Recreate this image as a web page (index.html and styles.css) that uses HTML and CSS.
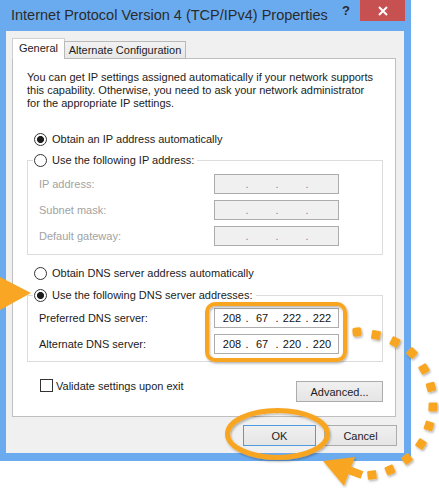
FILE: index.html
```html
<!DOCTYPE html>
<html lang="en">
<head>
<meta charset="utf-8">
<title>Internet Protocol Version 4 (TCP/IPv4) Properties</title>
<link rel="stylesheet" href="styles.css">
</head>
<body>
<div class="stage">
  <div class="window">
    <div class="titlebar">
      <span class="title">Internet Protocol Version 4 (TCP/IPv4) Properties</span>
      <span class="help">?</span>
      <span class="close">
        <svg width="10" height="10" viewBox="0 0 10 10"><path d="M1 1 L9 9 M9 1 L1 9" stroke="#fff" stroke-width="2" fill="none"/></svg>
      </span>
    </div>
    <div class="client">
      <div class="tabs">
        <div class="tab active">General</div>
        <div class="tab">Alternate Configuration</div>
      </div>
      <div class="panel">
        <p class="intro">You can get IP settings assigned automatically if your network supports<br>this capability. Otherwise, you need to ask your network administrator<br>for the appropriate IP settings.</p>

        <div class="opt first"><span class="radio on"></span>Obtain an IP address automatically</div>

        <div class="group g1">
          <div class="legend opt"><span class="radio"></span>Use the following IP address:</div>
          <div class="rows">
            <div class="row disabled"><span class="lbl">IP address:</span>
              <span class="ip"><span class="oct"></span><span class="dot">.</span><span class="oct"></span><span class="dot">.</span><span class="oct"></span><span class="dot">.</span><span class="oct"></span></span></div>
            <div class="row disabled"><span class="lbl">Subnet mask:</span>
              <span class="ip"><span class="oct"></span><span class="dot">.</span><span class="oct"></span><span class="dot">.</span><span class="oct"></span><span class="dot">.</span><span class="oct"></span></span></div>
            <div class="row disabled"><span class="lbl">Default gateway:</span>
              <span class="ip"><span class="oct"></span><span class="dot">.</span><span class="oct"></span><span class="dot">.</span><span class="oct"></span><span class="dot">.</span><span class="oct"></span></span></div>
          </div>
        </div>

        <div class="opt dnsauto"><span class="radio"></span>Obtain DNS server address automatically</div>

        <div class="group g2">
          <div class="legend opt"><span class="radio on"></span>Use the following DNS server addresses:</div>
          <div class="rows">
            <div class="row"><span class="lbl">Preferred DNS server:</span>
              <span class="ip"><span class="oct">208</span><span class="dot">.</span><span class="oct">67</span><span class="dot">.</span><span class="oct">222</span><span class="dot">.</span><span class="oct">222</span></span></div>
            <div class="row"><span class="lbl">Alternate DNS server:</span>
              <span class="ip"><span class="oct">208</span><span class="dot">.</span><span class="oct">67</span><span class="dot">.</span><span class="oct">220</span><span class="dot">.</span><span class="oct">220</span></span></div>
          </div>
        </div>

        <div class="bottomrow">
          <div class="check"><span class="box"></span>Validate settings upon exit</div>
          <div class="btn adv">Advanced...</div>
        </div>
      </div>
      <div class="buttons">
        <div class="btn default">OK</div>
        <div class="btn">Cancel</div>
      </div>
    </div>
  </div>

  <svg class="annot" width="439" height="488" viewBox="0 0 439 488">
    <defs>
      <filter id="sh" x="-30%" y="-30%" width="170%" height="170%">
        <feDropShadow dx="1" dy="1.5" stdDeviation="1.2" flood-color="#000" flood-opacity="0.3"/>
      </filter>
    </defs>
    <polygon points="0,277 31,293 0,310" fill="#f8a623"/>
    <rect x="207" y="304" width="138" height="56" rx="8" fill="none" stroke="#f8a623" stroke-width="4" filter="url(#sh)"/>
    <ellipse cx="277.5" cy="434" rx="50" ry="23.5" fill="none" stroke="#f8a623" stroke-width="5" filter="url(#sh)"/>
    <g fill="#f8a623" filter="url(#sh)">
      <rect x="-4.5" y="-4.5" width="9" height="9" rx="2.5" transform="translate(357 332) rotate(-5)"/>
      <rect x="-4.5" y="-4.5" width="9" height="9" rx="1.2" transform="translate(376 335) rotate(10)"/>
      <rect x="-4.5" y="-4.5" width="9" height="9" rx="1.2" transform="translate(395 342) rotate(27)"/>
      <rect x="-4.5" y="-4.5" width="9" height="9" rx="1.2" transform="translate(412 353) rotate(43)"/>
      <rect x="-4.5" y="-4.5" width="9" height="9" rx="1.2" transform="translate(424 369) rotate(60)"/>
      <rect x="-4.5" y="-4.5" width="9" height="9" rx="1.2" transform="translate(431 387) rotate(75)"/>
      <rect x="-4.5" y="-4.5" width="9" height="9" rx="1.2" transform="translate(433 407) rotate(92)"/>
      <rect x="-4.5" y="-4.5" width="9" height="9" rx="1.2" transform="translate(429 426) rotate(108)"/>
      <rect x="-4.5" y="-4.5" width="9" height="9" rx="1.2" transform="translate(421 444) rotate(124)"/>
      <rect x="-4.5" y="-4.5" width="9" height="9" rx="1.2" transform="translate(407 459) rotate(141)"/>
      <rect x="-4.5" y="-4.5" width="9" height="9" rx="1.2" transform="translate(390 470) rotate(157)"/>
      <rect x="-4.5" y="-4.5" width="9" height="9" rx="1.2" transform="translate(372 475) rotate(173)"/>
      <polygon points="323,461 355,457 344,486"/>
    </g>
    <line x1="346" y1="469" x2="362" y2="475" stroke="#f8a623" stroke-width="8"/>
  </svg>
</div>
</body>
</html>
```

FILE: styles.css
```css
* { box-sizing: border-box; }

html, body {
  margin: 0;
  padding: 0;
}

body {
  width: 439px;
  height: 488px;
  overflow: hidden;
  background: #ffffff;
  font-family: "Liberation Sans", Arial, sans-serif;
  font-size: 11px;
  color: #1c1c1c;
}

.stage {
  position: relative;
  width: 439px;
  height: 488px;
}

/* window frame */
.window {
  width: 411px;
  height: 461px;
  background: #6aabf0;
  display: flex;
  flex-direction: column;
}

.titlebar {
  height: 31px;
  display: flex;
  align-items: flex-start;
  padding: 0 6px 0 11px;
}

.title {
  flex: 1;
  font-size: 14.5px;
  line-height: 30px;
  color: #2b2b2b;
  white-space: nowrap;
}

.help {
  font-size: 13px;
  font-weight: bold;
  line-height: 21px;
  color: #2b2b2b;
  margin-right: 10px;
}

.close {
  width: 45px;
  height: 21px;
  background: #c75050;
  display: flex;
  align-items: center;
  justify-content: center;
}

.close svg { display: block; }

.client {
  width: 398px;
  height: 422px;
  margin-left: 6px;
  background: #f0f0f0;
  padding: 7px 8px 0 6px;
}

/* tabs */
.tabs {
  display: flex;
  align-items: flex-end;
  height: 21px;
  margin-bottom: -1px;
  position: relative;
  z-index: 1;
}

.tab {
  height: 18px;
  width: 122px;
  margin-left: -1px;
  border: 1px solid #b9b9b9;
  background: linear-gradient(#f2f2f2, #e7e7e7);
  display: flex;
  align-items: center;
  justify-content: center;
  white-space: nowrap;
}

.tab.active {
  height: 21px;
  width: 53px;
  margin-left: 0;
  background: #ffffff;
  border-color: #d0d0d0;
  border-bottom: none;
  padding-bottom: 2px;
}

.panel {
  width: 384px;
  height: 359px;
  background: #ffffff;
  border: 1px solid #bfbfbf;
  padding: 12px 12px 0 14px;
}

.intro {
  margin: 0;
  line-height: 13px;
  white-space: nowrap;
}

/* radio options */
.opt {
  display: flex;
  align-items: center;
  height: 16px;
  padding-left: 7px;
  white-space: nowrap;
}

.opt.first { margin-top: 21px; }
.opt.dnsauto { margin-top: 10px; }

.radio {
  width: 13px;
  height: 13px;
  border: 1px solid #333333;
  border-radius: 50%;
  background: #ffffff;
  margin-right: 5px;
  flex: none;
}

.radio.on {
  background: radial-gradient(circle, #1c1c1c 0, #1c1c1c 3.1px, #ffffff 3.9px);
}

/* group boxes */
.group {
  border: 1px solid #dcdcdc;
}

.g1 { margin-top: 13px; padding-bottom: 8px; }
.g2 { margin-top: 14px; padding-bottom: 7px; }

.legend {
  width: fit-content;
  margin: -9px 0 0 5px;
  padding: 0 3px 0 1px;
  background: #ffffff;
}

.rows {
  display: flex;
  flex-direction: column;
  gap: 6px;
}

.g1 .rows { padding-top: 6px; }
.g2 .rows { padding-top: 5px; }

.row {
  display: grid;
  grid-template-columns: 175px 125px;
  align-items: center;
  height: 20px;
  padding-left: 11px;
}

.row.disabled .lbl { color: #a2a2a2; }

.ip {
  display: flex;
  align-items: center;
  width: 125px;
  height: 20px;
  border: 1px solid #acacac;
  background: #ffffff;
  padding-left: 3px;
  color: #111111;
}

.row.disabled .ip {
  background: #f0f0f0;
  color: #7a8a99;
}

.oct {
  width: 28px;
  text-align: center;
}

.dot {
  width: 2px;
  display: flex;
  justify-content: center;
}

/* bottom row */
.bottomrow {
  margin-top: 17px;
  display: flex;
  justify-content: space-between;
  align-items: flex-start;
}

.check {
  display: flex;
  align-items: center;
  height: 13px;
  padding-left: 13px;
  white-space: nowrap;
}

.box {
  width: 13px;
  height: 13px;
  border: 1px solid #333333;
  background: #ffffff;
  margin-right: 3px;
}

.btn {
  width: 73px;
  height: 21px;
  border: 1px solid #acacac;
  background: linear-gradient(#f0f0f0, #e5e5e5);
  display: flex;
  align-items: center;
  justify-content: center;
  white-space: nowrap;
}

.btn.adv {
  width: 87px;
  margin-top: 2px;
}

.btn.default {
  border-color: #4f9be0;
}

.buttons {
  margin-top: 8px;
  margin-right: -1px;
  display: flex;
  justify-content: flex-end;
  gap: 8px;
}

/* annotation overlay */
.annot {
  position: absolute;
  left: 0;
  top: 0;
  z-index: 5;
  pointer-events: none;
}
```
